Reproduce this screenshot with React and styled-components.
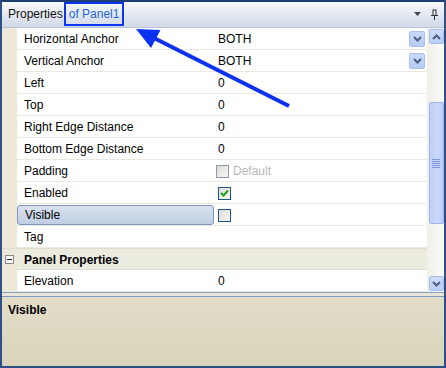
import React from 'react';
import styled, { createGlobalStyle } from 'styled-components';

const GlobalStyle = createGlobalStyle`
  html, body {
    margin: 0;
    padding: 0;
    background: #ffffff;
  }
  body {
    font-family: "Liberation Sans", Arial, sans-serif;
    font-size: 12px;
    color: #000;
  }
`;

const Window = styled.div`
  position: relative;
  width: 446px;
  height: 368px;
  box-sizing: border-box;
  border: 2px solid #2f5086;
  border-top-color: #1e3d72;
  display: flex;
  flex-direction: column;
  background: #ece9d8;
  overflow: hidden;
`;

const TitleBar = styled.div`
  height: 26px;
  flex: none;
  display: flex;
  align-items: center;
  padding: 0 0 1px 6px;
  background: linear-gradient(#f7f9fc, #dfe5ef 60%, #d2dae8);
  border-bottom: 1px solid #b6c2d6;
  box-sizing: border-box;
`;

const Title = styled.span`
  font-size: 12px;
  color: #111;
  margin-right: 1px;
`;

const Highlight = styled.span`
  font-size: 12px;
  color: #2566d6;
  border: 2px solid #0b35f0;
  padding: 3px 3px 3px 3px;
  line-height: 14px;
`;

const TitleIcons = styled.div`
  margin-left: auto;
  display: flex;
  align-items: center;
  gap: 10px;
  padding-right: 6px;
`;

const Body = styled.div`
  height: 264px;
  flex: none;
  display: flex;
  background: #fff;
`;

const Rows = styled.div`
  flex: 1;
  display: flex;
  flex-direction: column;
`;

const Row = styled.div`
  height: 22px;
  flex: none;
  display: flex;
  box-sizing: border-box;
  padding-top: 1px;
  background: ${(p) => (p.$category ? '#ecebe0' : '#fff')};
  border-bottom: 1px solid ${(p) => (p.$category ? '#e2dfd0' : '#ebe9df')};
  border-top: ${(p) => (p.$category ? '1px solid #e0dccb' : 'none')};
`;

const Margin = styled.div`
  width: 15px;
  flex: none;
  background: #ece9d8;
  display: flex;
  align-items: center;
  justify-content: center;
  margin: -1px 0 -1px 0;
`;

const Name = styled.div`
  width: 197px;
  flex: none;
  display: flex;
  align-items: center;
  padding-left: 7px;
  box-sizing: border-box;
  font-weight: ${(p) => (p.$bold ? 'bold' : 'normal')};
  ${(p) =>
    p.$selected &&
    `
    border: 1px solid #7e96bc;
    border-radius: 3px;
    background: linear-gradient(#d9e1ee, #bfcde3);
    margin: 0;
    height: 20px;
  `}
`;

const Value = styled.div`
  flex: 1;
  display: flex;
  align-items: center;
  padding-left: 4px;
  padding-right: 2px;
  gap: 4px;
`;

const DropButton = styled.div`
  margin-left: auto;
  width: 16px;
  height: 16px;
  border-radius: 2px;
  background: linear-gradient(#c9d9fb, #b5cbf7);
  border: 1px solid #a8bfeb;
  box-sizing: border-box;
  display: flex;
  align-items: center;
  justify-content: center;
`;

const Check = styled.div`
  width: 13px;
  height: 13px;
  box-sizing: border-box;
  border: 1px solid ${(p) => (p.$disabled ? '#8d99a8' : '#1c5180')};
  background: linear-gradient(135deg, #dcdcd6, #f8f8f6);
  display: flex;
  align-items: center;
  justify-content: center;
  margin-left: ${(p) => (p.$disabled ? '-2px' : '0')};
`;

const Muted = styled.span`
  color: #b8b8b8;
`;

const Scrollbar = styled.div`
  width: 17px;
  flex: none;
  background: linear-gradient(90deg, #f0efe9, #fbfbf9);
  display: flex;
  flex-direction: column;
  align-items: center;
  padding: 1px 0 1px 1px;
  box-sizing: border-box;
`;

const ScrollButton = styled.div`
  width: 15px;
  height: 15px;
  flex: none;
  box-sizing: border-box;
  border: 1px solid #a6bde9;
  border-radius: 2px;
  background: linear-gradient(#cfdcfb, #b8cdf8);
  display: flex;
  align-items: center;
  justify-content: center;
`;

const Track = styled.div`
  flex: 1;
  width: 100%;
  display: flex;
  flex-direction: column;
  align-items: center;
  padding-top: 58px;
  padding-bottom: 52px;
`;

const Thumb = styled.div`
  width: 15px;
  flex: 1;
  box-sizing: border-box;
  border: 1px solid #9fb6e6;
  border-radius: 2px;
  background: linear-gradient(90deg, #bfd0fa, #c9d8fb 60%, #b9cbf6);
  display: flex;
  align-items: center;
  justify-content: center;
`;

const Splitter = styled.div`
  height: 5px;
  flex: none;
  box-sizing: border-box;
  border-top: 1px solid #86a1c9;
  border-bottom: 1px solid #7c9ac6;
  background: #e9e6d8;
`;

const Help = styled.div`
  flex: 1;
  background: linear-gradient(#e3ddc8, #dbd4bc);
  padding: 6px 6px;
  font-weight: bold;
`;

const Overlay = styled.svg`
  position: absolute;
  left: 0;
  top: 0;
  pointer-events: none;
`;

const Chevron = ({ up }) => (
  <svg width="9" height="6" viewBox="0 0 9 6">
    <path
      d={up ? 'M1 5 L4.5 1.5 L8 5' : 'M1 1 L4.5 4.5 L8 1'}
      fill="none"
      stroke="#4b5f86"
      strokeWidth="2"
    />
  </svg>
);

const rows = [
  { name: 'Horizontal Anchor', value: 'BOTH', drop: true },
  { name: 'Vertical Anchor', value: 'BOTH', drop: true },
  { name: 'Left', value: '0' },
  { name: 'Top', value: '0' },
  { name: 'Right Edge Distance', value: '0' },
  { name: 'Bottom Edge Distance', value: '0' },
  { name: 'Padding', check: 'default' },
  { name: 'Enabled', check: 'on' },
  { name: 'Visible', check: 'off', selected: true },
  { name: 'Tag', value: '' },
  { name: 'Panel Properties', category: true },
  { name: 'Elevation', value: '0' },
];

const renderValue = (r) => {
  if (r.check === 'default')
    return (
      <>
        <Check $disabled />
        <Muted>Default</Muted>
      </>
    );
  if (r.check)
    return (
      <Check>
        {r.check === 'on' && (
          <svg width="9" height="8" viewBox="0 0 9 8">
            <path d="M1 4 L3.5 6.5 L8 1.5" fill="none" stroke="#22a022" strokeWidth="2" />
          </svg>
        )}
      </Check>
    );
  return (
    <>
      <span>{r.value}</span>
      {r.drop && (
        <DropButton>
          <Chevron />
        </DropButton>
      )}
    </>
  );
};

export default function App() {
  return (
    <>
      <GlobalStyle />
      <Window>
        <TitleBar>
          <Title>Properties</Title>
          <Highlight>of Panel1</Highlight>
          <TitleIcons>
            <svg width="7" height="4" viewBox="0 0 7 4">
              <path d="M0 0 H7 L3.5 4 Z" fill="#444" />
            </svg>
            <svg width="7" height="11" viewBox="0 0 7 11">
              <path d="M2 0.5 V6 M5 0.5 V6 M2 1 H5 M0 6.5 H7 M3.5 7 V11" stroke="#333" strokeWidth="1" fill="none" />
            </svg>
          </TitleIcons>
        </TitleBar>
        <Body>
          <Rows>
            {rows.map((r) =>
              r.category ? (
                <Row key={r.name} $category>
                  <Margin>
                    <svg width="9" height="9" viewBox="0 0 9 9">
                      <rect x="0.5" y="0.5" width="8" height="8" fill="#fff" stroke="#8a8a8a" />
                      <path d="M2 4.5 H7" stroke="#222" />
                    </svg>
                  </Margin>
                  <Name $bold>{r.name}</Name>
                </Row>
              ) : (
                <Row key={r.name}>
                  <Margin />
                  <Name $selected={r.selected}>{r.name}</Name>
                  <Value>{renderValue(r)}</Value>
                </Row>
              )
            )}
          </Rows>
          <Scrollbar>
            <ScrollButton>
              <Chevron up />
            </ScrollButton>
            <Track>
              <Thumb>
                <svg width="8" height="9" viewBox="0 0 8 9">
                  <path d="M0 0.5 H8 M0 2.5 H8 M0 4.5 H8 M0 6.5 H8 M0 8.5 H8" stroke="#7d97d6" />
                </svg>
              </Thumb>
            </Track>
            <ScrollButton>
              <Chevron />
            </ScrollButton>
          </Scrollbar>
        </Body>
        <Splitter />
        <Help>Visible</Help>
        <Overlay width="446" height="368" viewBox="0 0 446 368">
          <line x1="287" y1="104" x2="150" y2="35" stroke="#0a32f0" strokeWidth="4" />
          <path d="M134 27 L158.5 28 L149 46 Z" fill="#0a32f0" />
        </Overlay>
      </Window>
    </>
  );
}
